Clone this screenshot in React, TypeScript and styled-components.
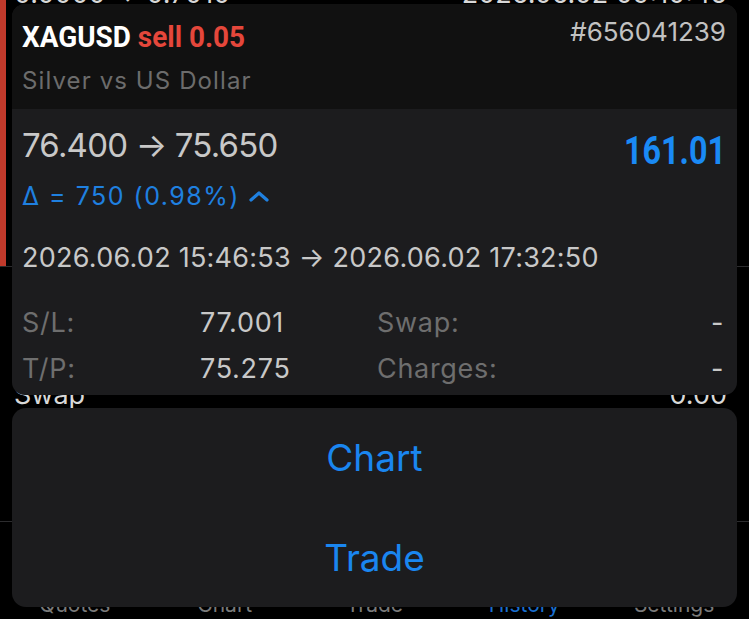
import React from "react";
import styled, { createGlobalStyle } from "styled-components";

const Global = createGlobalStyle`
  html, body { margin: 0; padding: 0; background: #000; }
  body { font-family: "Inter", "Liberation Sans", sans-serif; -webkit-font-smoothing: antialiased; }
  * { box-sizing: border-box; }
`;

const SF = `"Inter", "Liberation Sans", sans-serif`;
const COND = `"Roboto", "Liberation Sans", sans-serif`;

const Screen = styled.div`
  position: relative;
  width: 749px;
  height: 619px;
  overflow: hidden;
  background: #000;
  font-family: ${SF};
`;

/* ---------- background page (dimmed behind the menu) ---------- */
const Behind = styled.div`
  display: flex;
  flex-direction: column;
`;

const DealRow = styled.div`
  display: flex;
  height: 266px;
`;

const RedBar = styled.div`
  width: 6px;
  background: #c0392b;
`;

const DealLine = styled.div`
  flex: 1;
  display: flex;
  justify-content: space-between;
  padding: 0 22px 0 8px;
  margin-top: -22px;
  height: 32px;
  font-size: 27px;
  line-height: 32px;
  color: #d8d8d8;
`;

const Divider = styled.div`
  height: 1px;
  background: #2c2c2e;
`;

const DetailsBlock = styled.div`
  height: 254px;
  padding: 112px 22px 0 14px;
`;

const DetailLine = styled.div`
  display: flex;
  justify-content: space-between;
  font-size: 27px;
  line-height: 32px;
  color: #d8d8d8;
`;

const TabBar = styled.div`
  display: grid;
  grid-template-columns: repeat(5, 1fr);
  padding-top: 70px;
`;

const TabLabel = styled.div<{ $active?: boolean }>`
  text-align: center;
  font-size: 21px;
  line-height: 26px;
  color: ${(p) => (p.$active ? "#1a6fd0" : "#7a7a7a")};
`;

/* ---------- overlay: preview card + action menu ---------- */
const Overlay = styled.div`
  position: absolute;
  top: 4px;
  left: 12px;
  right: 12px;
  display: flex;
  flex-direction: column;
  gap: 13px;
`;

const PreviewCard = styled.div`
  height: 391px;
  border-radius: 13px;
  overflow: hidden;
  display: flex;
  flex-direction: column;
  background: #1c1c1e;
`;

const Header = styled.div`
  height: 105px;
  background: #111111;
  padding: 15px 11px 0 10px;
`;

const TitleRow = styled.div`
  display: flex;
  justify-content: space-between;
  align-items: flex-start;
`;

const Title = styled.div`
  font-family: ${COND};
  font-weight: 700;
  font-size: 30px;
  line-height: 36px;
  color: #ffffff;
  white-space: nowrap;
  transform: scaleX(0.93);
  transform-origin: left center;
`;

const Side = styled.span`
  color: #e5473b;
`;

const OrderNo = styled.div`
  margin-top: -3px;
  font-size: 26px;
  line-height: 32px;
  color: #c2c2c2;
`;

const Subtitle = styled.div`
  margin-top: 11px;
  font-size: 24px;
  line-height: 30px;
  letter-spacing: 1.1px;
  color: #6c6c6c;
`;

const Body = styled.div`
  flex: 1;
  padding: 16px 11px 0 10px;
  display: flex;
  flex-direction: column;
`;

const TopSection = styled.div`
  display: flex;
  justify-content: space-between;
  align-items: flex-start;
`;

const LeftCol = styled.div`
  display: flex;
  flex-direction: column;
`;

const Prices = styled.div`
  font-size: 33px;
  line-height: 40px;
  letter-spacing: -0.8px;
  color: #c8c8c8;
`;

const Delta = styled.div`
  margin-top: 16px;
  display: flex;
  align-items: center;
  gap: 9px;
  font-size: 25px;
  line-height: 30px;
  letter-spacing: 1.5px;
  color: #1f80e0;
`;

const Profit = styled.div`
  margin-top: 4px;
  font-family: ${COND};
  font-weight: 700;
  font-size: 38px;
  line-height: 44px;
  color: #1a8af5;
  transform: scaleX(0.85);
  transform-origin: right center;
`;

const Dates = styled.div`
  margin-top: 31px;
  font-size: 27px;
  line-height: 32px;
  letter-spacing: 0.25px;
  color: #c8c8c8;
`;

const Params = styled.div`
  margin-top: 33px;
  display: grid;
  grid-template-columns: 178px 177px 1fr auto;
  row-gap: 14px;
  font-size: 27px;
  line-height: 32px;
  letter-spacing: 0.7px;
`;

const ParamLabel = styled.div`
  color: #6e6e6e;
`;

const ParamValue = styled.div<{ $right?: boolean }>`
  color: #c8c8c8;
  text-align: ${(p) => (p.$right ? "right" : "left")};
  padding-right: ${(p) => (p.$right ? "2px" : "0")};
`;

const Menu = styled.div`
  height: 199px;
  border-radius: 14px;
  background: #1c1c1e;
  display: flex;
  flex-direction: column;
`;

const MenuItem = styled.div`
  flex: 1;
  display: flex;
  align-items: center;
  justify-content: center;
  font-size: 37px;
  color: #1a86f0;
`;

const Chevron = () => (
  <svg width="20" height="12" viewBox="0 0 20 12" fill="none">
    <polyline points="2,10 10,3 18,10" stroke="#1f80e0" strokeWidth="3.2" strokeLinecap="round" strokeLinejoin="round" />
  </svg>
);

export default function App() {
  return (
    <Screen>
      <Global />
      <Behind>
        <DealRow>
          <RedBar />
          <DealLine>
            <span>0.0000 → 0.7010</span>
            <span>2026.06.02 09:10:45</span>
          </DealLine>
        </DealRow>
        <Divider />
        <DetailsBlock>
          <DetailLine>
            <span>Swap</span>
            <span>0.00</span>
          </DetailLine>
        </DetailsBlock>
        <Divider />
        <TabBar>
          <TabLabel>Quotes</TabLabel>
          <TabLabel>Chart</TabLabel>
          <TabLabel>Trade</TabLabel>
          <TabLabel $active>History</TabLabel>
          <TabLabel>Settings</TabLabel>
        </TabBar>
      </Behind>

      <Overlay>
        <PreviewCard>
          <Header>
            <TitleRow>
              <Title>
                XAGUSD <Side>sell 0.05</Side>
              </Title>
              <OrderNo>#656041239</OrderNo>
            </TitleRow>
            <Subtitle>Silver vs US Dollar</Subtitle>
          </Header>
          <Body>
            <TopSection>
              <LeftCol>
                <Prices>76.400 → 75.650</Prices>
                <Delta>
                  <span>Δ = 750 (0.98%)</span>
                  <Chevron />
                </Delta>
              </LeftCol>
              <Profit>161.01</Profit>
            </TopSection>
            <Dates>2026.06.02 15:46:53 → 2026.06.02 17:32:50</Dates>
            <Params>
              <ParamLabel>S/L:</ParamLabel>
              <ParamValue>77.001</ParamValue>
              <ParamLabel>Swap:</ParamLabel>
              <ParamValue $right>-</ParamValue>
              <ParamLabel>T/P:</ParamLabel>
              <ParamValue>75.275</ParamValue>
              <ParamLabel>Charges:</ParamLabel>
              <ParamValue $right>-</ParamValue>
            </Params>
          </Body>
        </PreviewCard>
        <Menu>
          <MenuItem>Chart</MenuItem>
          <MenuItem>Trade</MenuItem>
        </Menu>
      </Overlay>
    </Screen>
  );
}
